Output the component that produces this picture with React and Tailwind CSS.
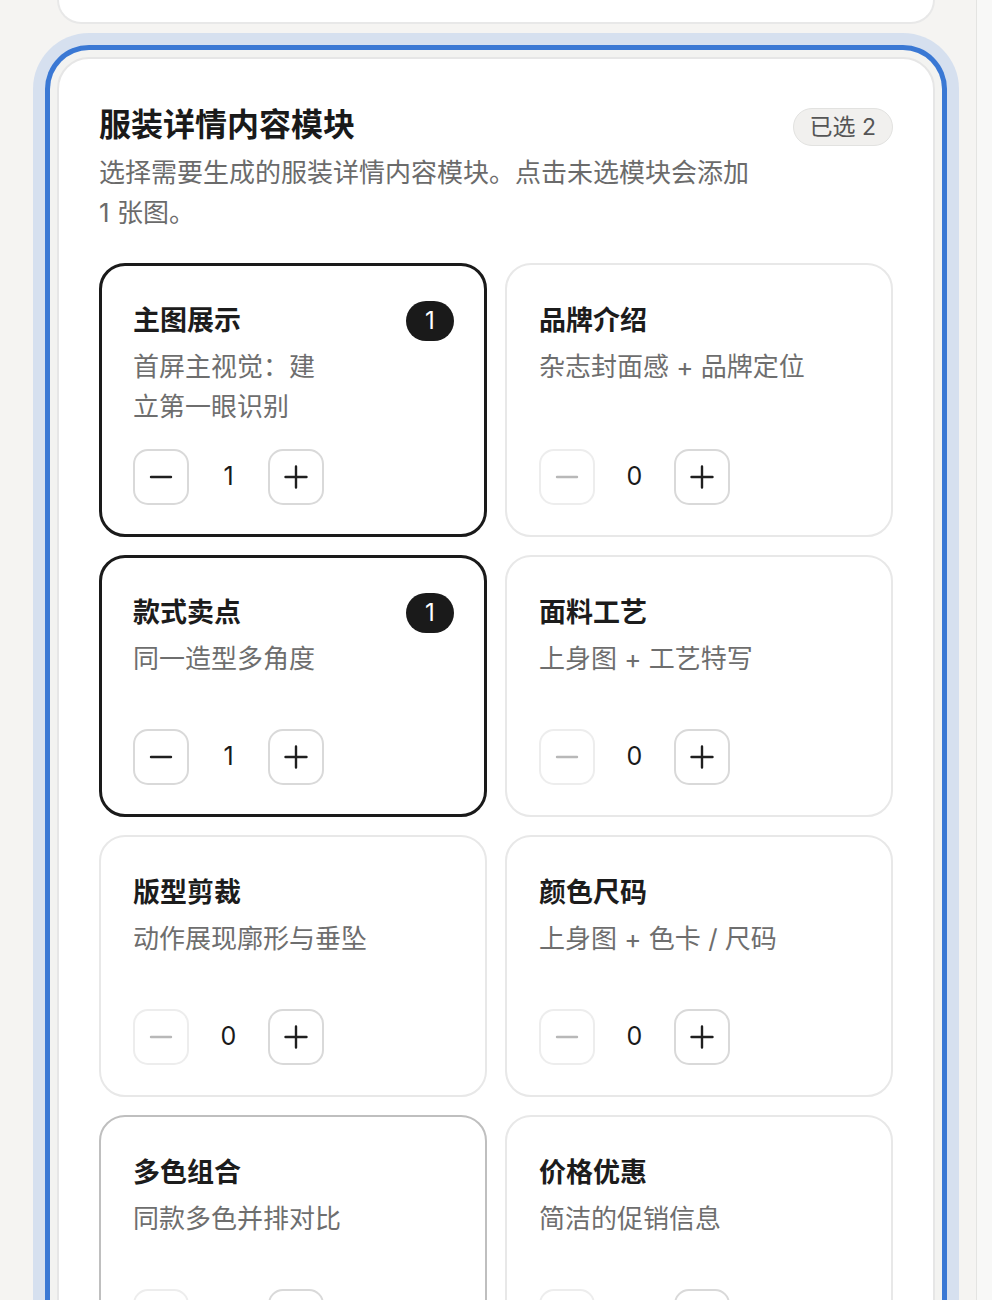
import React, { useState } from 'react';

const MODULES = [
  { id: 'main', title: '主图展示', desc: '首屏主视觉：建立第一眼识别', count: 1 },
  { id: 'brand', title: '品牌介绍', desc: '杂志封面感 + 品牌定位', count: 0 },
  { id: 'style', title: '款式卖点', desc: '同一造型多角度', count: 1 },
  { id: 'fabric', title: '面料工艺', desc: '上身图 + 工艺特写', count: 0 },
  { id: 'fit', title: '版型剪裁', desc: '动作展现廓形与垂坠', count: 0 },
  { id: 'size', title: '颜色尺码', desc: '上身图 + 色卡 / 尺码', count: 0 },
  { id: 'colors', title: '多色组合', desc: '同款多色并排对比', count: 0, hovered: true },
  { id: 'price', title: '价格优惠', desc: '简洁的促销信息', count: 0 },
];

function MinusIcon({ disabled }) {
  return (
    <svg width="24" height="24" viewBox="0 0 24 24" fill="none">
      <path d="M2 12h20" stroke={disabled ? '#b8b8b8' : '#1f1f1f'} strokeWidth="2.4" strokeLinecap="round" />
    </svg>
  );
}

function PlusIcon() {
  return (
    <svg width="24" height="24" viewBox="0 0 24 24" fill="none">
      <path d="M1.5 12h21M12 1.5v21" stroke="#1f1f1f" strokeWidth="2.4" strokeLinecap="round" />
    </svg>
  );
}

function Stepper({ value, onChange }) {
  const disabled = value === 0;
  return (
    <div className="flex items-center">
      <button
        type="button"
        disabled={disabled}
        onClick={() => onChange(Math.max(0, value - 1))}
        className={`w-[56px] h-[56px] rounded-[15px] border-2 flex items-center justify-center bg-white ${disabled ? 'border-[#ededed]' : 'border-[#d9d9d9]'}`}
      >
        <MinusIcon disabled={disabled} />
      </button>
      <span className="w-[79px] text-center text-[25px] text-[#1a1a1a]">{value}</span>
      <button
        type="button"
        onClick={() => onChange(value + 1)}
        className="w-[56px] h-[56px] rounded-[15px] border-2 border-[#d9d9d9] flex items-center justify-center bg-white"
      >
        <PlusIcon />
      </button>
    </div>
  );
}

function ModuleCard({ mod, count, onChange }) {
  const selected = count > 0;
  let frame = 'border-2 border-[#e8e8e8] pt-[38px] pb-[30px] pl-[32px] pr-[31px]';
  if (selected) frame = 'border-[3px] border-[#1a1a1a] pt-[37px] pb-[29px] pl-[31px] pr-[30px]';
  else if (mod.hovered) frame = 'border-2 border-[#bfbfbf] pt-[38px] pb-[30px] pl-[32px] pr-[31px]';

  return (
    <div className={`flex flex-col rounded-[26px] bg-white ${frame}`}>
      <div className="flex items-center justify-between h-[36px]">
        <h3 className="text-[27px] leading-[36px] font-semibold text-[#1c1c1c]">{mod.title}</h3>
        {selected && (
          <span className="min-w-[48px] h-[40px] px-3 rounded-full bg-[#1a1a1a] text-white text-[24px] flex items-center justify-center">
            {count}
          </span>
        )}
      </div>
      <p className={`mt-2 min-h-[68px] text-[26px] leading-[40px] text-[#6e6e6e] ${selected ? 'max-w-[195px]' : ''}`}>
        {mod.desc}
      </p>
      <div className="mt-auto pt-[22px]">
        <Stepper value={count} onChange={onChange} />
      </div>
    </div>
  );
}

export default function App() {
  const [counts, setCounts] = useState(() =>
    Object.fromEntries(MODULES.map((m) => [m.id, m.count]))
  );
  const picked = Object.values(counts).filter((c) => c > 0).length;

  return (
    <div
      className="flex min-h-[1300px] bg-[#f8f8f7]"
      style={{ fontFamily: 'Inter, "Noto Sans CJK SC", sans-serif' }}
    >
      <main className="w-[977px] shrink-0 bg-[#f5f4f2] border-r border-[#e4e4e2] pl-[57px] pr-[41px] pb-16">
        {/* previous section, scrolled mostly out of view */}
        <div className="h-[24px] rounded-b-[30px] bg-white border-2 border-t-0 border-[#e8e8e8]" />

        <section className="mt-[33px] rounded-[32px] bg-white border-2 border-[#e6e6e6] pt-[46px] px-[40px] pb-[40px] shadow-[0_0_0_7px_#f3f3f1,0_0_0_12px_#3a78d4,0_0_0_24px_#d6e0ef]">
          <div className="flex items-start justify-between">
            <div>
              <h2 className="text-[32px] leading-[40px] font-semibold text-[#1a1a1a]">服装详情内容模块</h2>
              <p className="mt-2 max-w-[660px] text-[26px] leading-[40px] text-[#6b6b6b]">
                选择需要生成的服装详情内容模块。点击未选模块会添加 1 张图。
              </p>
            </div>
            <span className="mt-[3px] h-[38px] px-[16px] rounded-full bg-[#f1f0ee] border border-[#e2e2e0] text-[23px] text-[#555] flex items-center whitespace-nowrap">
              已选 {picked}
            </span>
          </div>

          <div className="mt-[30px] grid grid-cols-2 gap-[18px]">
            {MODULES.map((m) => (
              <ModuleCard
                key={m.id}
                mod={m}
                count={counts[m.id]}
                onChange={(v) => setCounts((c) => ({ ...c, [m.id]: v }))}
              />
            ))}
          </div>
        </section>
      </main>
    </div>
  );
}
